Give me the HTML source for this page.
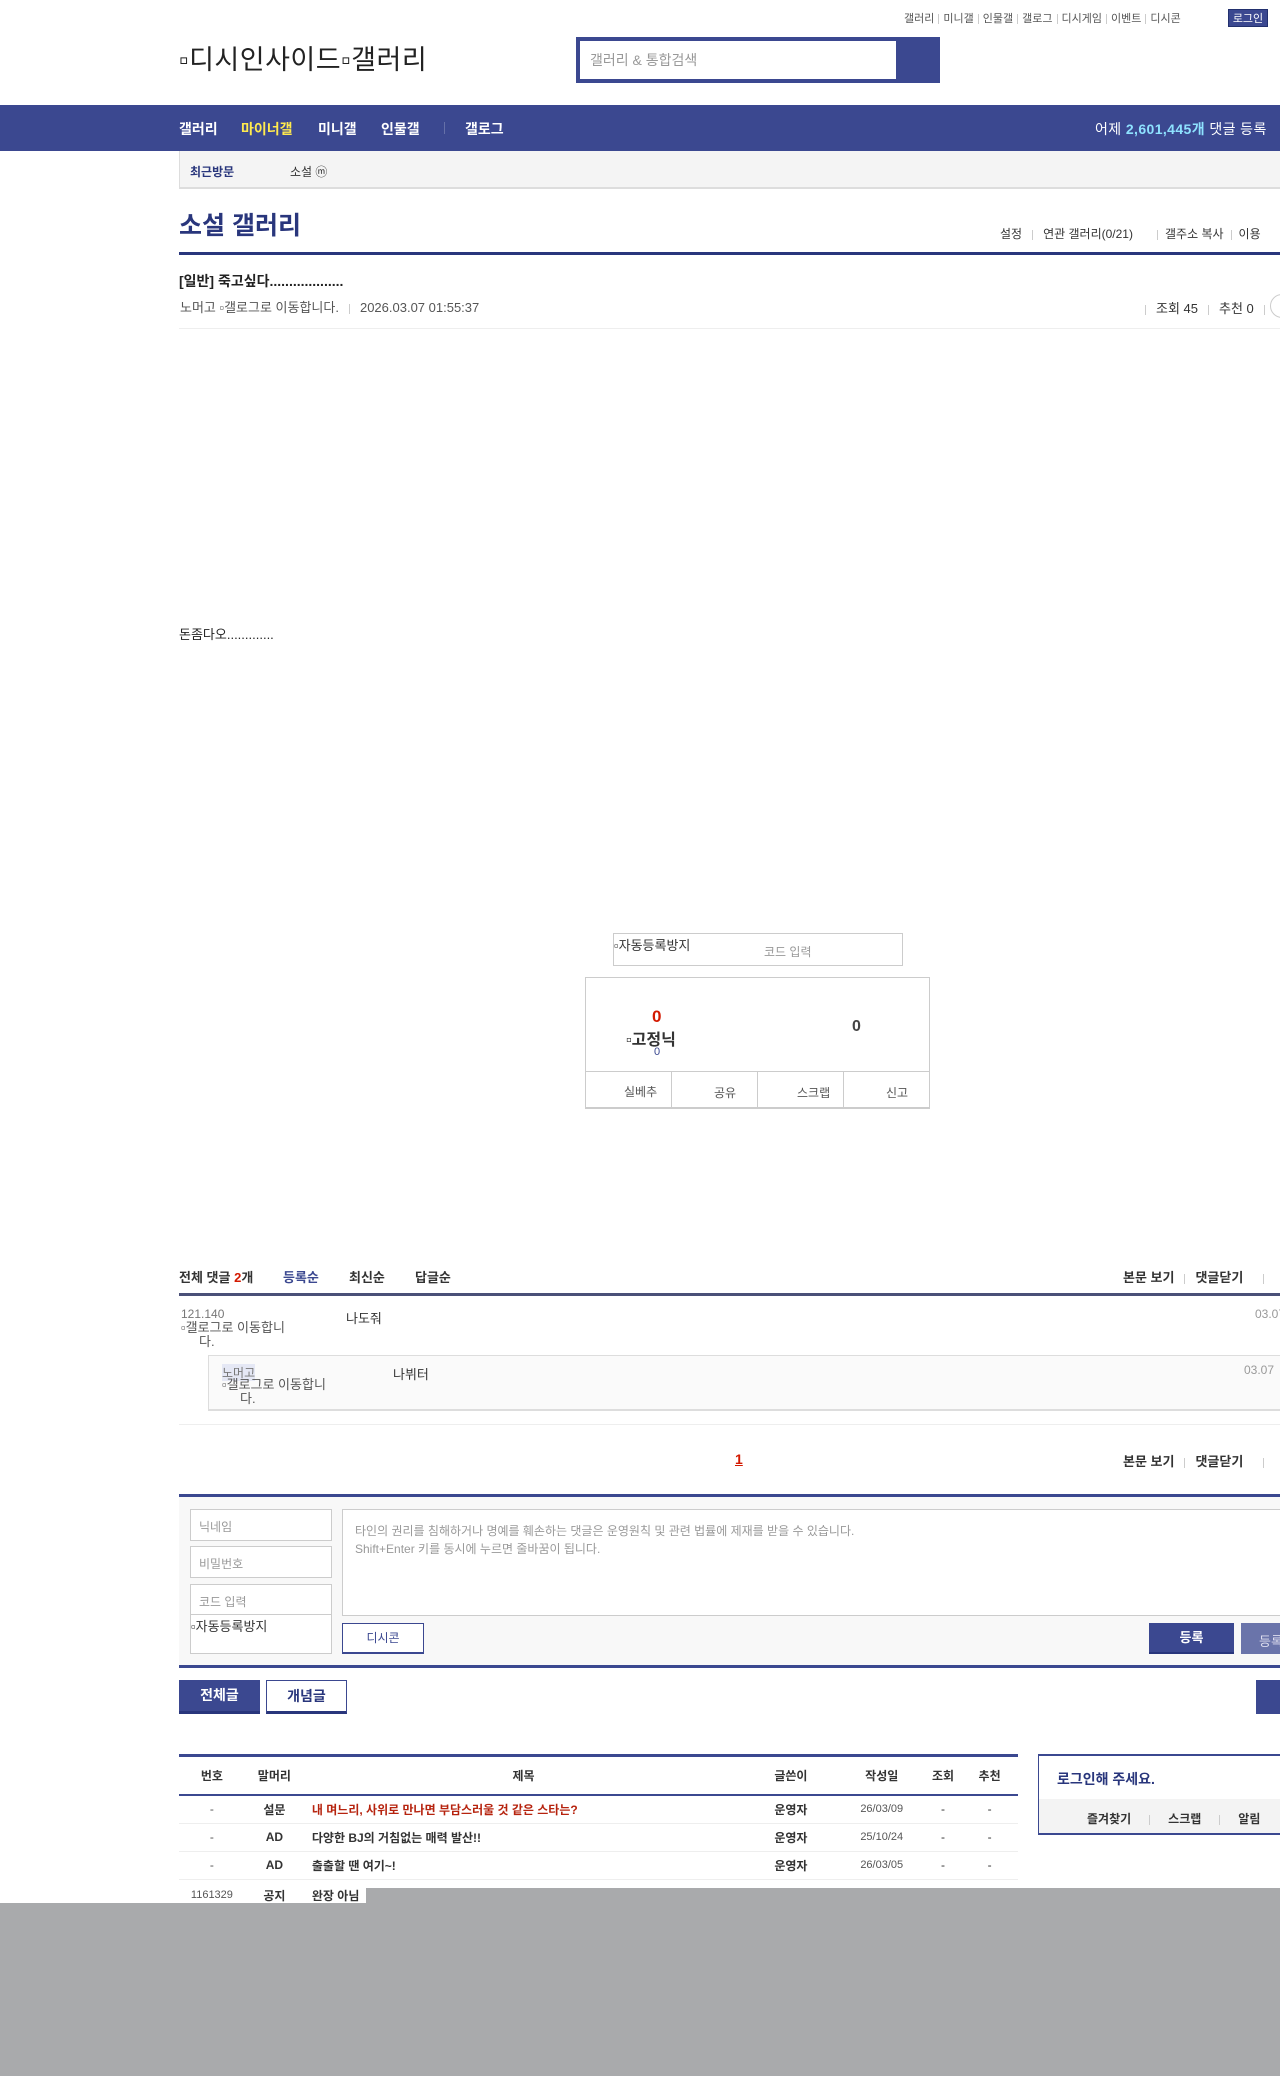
<!DOCTYPE html>
<html><head><meta charset="utf-8"><style>
*{margin:0;padding:0;box-sizing:border-box}
body{width:1280px;height:2076px;position:relative;overflow:hidden;background:#fff;font-family:"Liberation Sans","Noto Sans CJK KR",sans-serif;color:#333;font-size:12px}
.a{position:absolute;white-space:nowrap}
.b{font-weight:bold}
.nav{color:#fff;font-size:14px;font-weight:bold}
.sep{display:inline-block;width:1px;height:10px;background:#ccc;margin:0 7px;vertical-align:middle}
td,th{text-align:center;font-size:12px;height:28px;border-bottom:1px solid #eee}
th{font-weight:bold;height:38px;border-bottom:2px solid #3b4890;color:#333}
</style></head><body>
<div class="a" style="top:10px;left:904px;font-size:11px;color:#555">갤러리<span class="sep" style="margin:0 4px"></span>미니갤<span class="sep" style="margin:0 4px"></span>인물갤<span class="sep" style="margin:0 4px"></span>갤로그<span class="sep" style="margin:0 4px"></span>디시게임<span class="sep" style="margin:0 4px"></span>이벤트<span class="sep" style="margin:0 4px"></span>디시콘</div>
<div class="a" style="top:9px;left:1228px;width:40px;height:18px;background:#3b4890;color:#fff;font-size:11px;text-align:center;line-height:18px;border:1px solid #22306e">로그인</div>
<div class="a" style="top:38px;left:179px;font-size:27px;color:#222;letter-spacing:0.5px">▫디시인사이드▫갤러리</div>
<div class="a" style="top:37px;left:576px;width:364px;height:46px;background:#3b4890"></div>
<div class="a" style="top:41px;left:580px;width:316px;height:38px;background:#fff;color:#999;font-size:14px;line-height:38px;padding-left:10px">갤러리 &amp; 통합검색</div>
<div class="a" style="top:105px;left:0;width:1280px;height:46px;background:#3b4890"></div>
<div class="a nav" style="top:119px;left:179px">갤러리</div>
<div class="a nav" style="top:119px;left:241px;color:#ffea4e">마이너갤</div>
<div class="a nav" style="top:119px;left:318px">미니갤</div>
<div class="a nav" style="top:119px;left:381px">인물갤</div>
<div class="a" style="top:122px;left:444px;width:1px;height:12px;background:#6570a8"></div>
<div class="a nav" style="top:119px;left:465px">갤로그</div>
<div class="a" style="top:119px;left:1095px;color:#fff;font-size:14px;letter-spacing:0.4px">어제 <b style="color:#8ee2ff">2,601,445개</b> 댓글 등록</div>
<div class="a" style="top:151px;left:179px;width:1110px;height:38px;background:#f4f4f4;border-left:1px solid #ddd;border-bottom:2px solid #ddd"></div>
<div class="a b" style="top:163px;left:190px;color:#29367c;font-size:12px">최근방문</div>
<div class="a" style="top:163px;left:290px;font-size:12px;color:#333">소설 ⓜ</div>
<div class="a b" style="top:206px;left:179px;font-size:25px;color:#29367c">소설 갤러리</div>
<div class="a" style="top:225px;left:1000px;font-size:12px;color:#333">설정<span class="sep" style="margin:0 10px"></span>연관 갤러리(0/21)<span class="sep" style="margin-left:24px"></span>갤주소 복사<span class="sep"></span>이용</div>
<div class="a" style="top:252px;left:179px;width:1110px;height:3px;background:#29367c"></div>
<div class="a b" style="top:271px;left:179px;font-size:14px;color:#222">[일반] 죽고싶다...................</div>
<div class="a" style="top:297px;left:180px;font-size:13px;color:#555">노머고 ▫갤로그로 이동합니다.<span class="sep" style="margin:0 10px"></span>2026.03.07 01:55:37</div>
<div class="a" style="top:298px;left:1135px;font-size:13px;color:#333"><span class="sep" style="margin:0 10px"></span>조회 45<span class="sep" style="margin:0 10px"></span>추천 0<span class="sep" style="margin:0 10px"></span></div>
<div class="a" style="top:294px;left:1270px;width:24px;height:24px;border:1px solid #ccc;border-radius:50%"></div>
<div class="a" style="top:328px;left:179px;width:1110px;height:1px;background:#eee"></div>
<div class="a" style="top:624px;left:179px;font-size:13px;color:#222">돈좀다오.............</div>
<div class="a" style="top:933px;left:613px;width:290px;height:33px;border:1px solid #ccc"></div>
<div class="a" style="top:935px;left:614px;font-size:13px;color:#333">▫자동등록방지</div>
<div class="a" style="top:943px;left:764px;font-size:12px;color:#999">코드 입력</div>
<div class="a" style="top:977px;left:585px;width:345px;height:132px;border:1px solid #ccc;border-bottom:2px solid #ccc"></div>
<div class="a b" style="top:1007px;left:652px;font-size:17px;color:#d31900">0</div>
<div class="a b" style="top:1026px;left:626px;font-size:16px;color:#333">▫고정닉</div>
<div class="a" style="top:1046px;left:654px;font-size:11px;color:#3b4890">0</div>
<div class="a b" style="top:1018px;left:852px;font-size:16px;color:#444">0</div>
<div class="a" style="top:1071px;left:585px;width:345px;height:1px;background:#ccc"></div>
<div class="a" style="top:1071px;left:671px;width:1px;height:36px;background:#ccc"></div>
<div class="a" style="top:1071px;left:757px;width:1px;height:36px;background:#ccc"></div>
<div class="a" style="top:1071px;left:843px;width:1px;height:36px;background:#ccc"></div>
<div class="a" style="top:1083px;left:624px;font-size:12px;color:#555">실베추</div>
<div class="a" style="top:1084px;left:714px;font-size:12px;color:#555">공유</div>
<div class="a" style="top:1084px;left:797px;font-size:12px;color:#555">스크랩</div>
<div class="a" style="top:1084px;left:886px;font-size:12px;color:#555">신고</div>
<div class="a b" style="top:1267px;left:179px;font-size:13px;color:#333">전체 댓글 <span style="color:#d31900">2</span>개</div>
<div class="a b" style="top:1267px;left:283px;font-size:13px;color:#3b4890">등록순</div>
<div class="a b" style="top:1267px;left:349px;font-size:13px">최신순</div>
<div class="a b" style="top:1267px;left:415px;font-size:13px">답글순</div>
<div class="a b" style="top:1267px;left:1123px;font-size:13px">본문 보기<span class="sep" style="margin:0 10px"></span>댓글닫기<span class="sep" style="margin:0 20px"></span></div>
<div class="a" style="top:1293px;left:179px;width:1110px;height:3px;background:#4a5078"></div>
<div class="a" style="top:1307px;left:181px;font-size:12px;color:#777">121.140</div>
<div class="a" style="top:1321px;left:181px;font-size:13px;color:#555;line-height:14px">▫갤로그로 이동합니<br>&nbsp;&nbsp;&nbsp;&nbsp;&nbsp;다.</div>
<div class="a" style="top:1308px;left:346px;font-size:13px;color:#333">나도줘</div>
<div class="a" style="top:1307px;left:1255px;font-size:12px;color:#999">03.07</div>
<div class="a" style="top:1355px;left:208px;width:1090px;height:56px;background:#fafafa;border:1px solid #ddd;border-bottom-width:2px"></div>
<div class="a" style="top:1364px;left:222px;font-size:12px;color:#777;background:#e5e8f5">노머고</div>
<div class="a" style="top:1378px;left:222px;font-size:13px;color:#555;line-height:14px">▫갤로그로 이동합니<br>&nbsp;&nbsp;&nbsp;&nbsp;&nbsp;다.</div>
<div class="a" style="top:1364px;left:393px;font-size:13px;color:#333">나뷔터</div>
<div class="a" style="top:1363px;left:1244px;font-size:12px;color:#999">03.07</div>
<div class="a" style="top:1424px;left:179px;width:1110px;height:1px;background:#eee"></div>
<div class="a b" style="top:1451px;left:735px;font-size:14px;color:#d31900;text-decoration:underline">1</div>
<div class="a b" style="top:1451px;left:1123px;font-size:13px">본문 보기<span class="sep" style="margin:0 10px"></span>댓글닫기<span class="sep" style="margin:0 20px"></span></div>
<div class="a" style="top:1494px;left:179px;width:1110px;height:174px;background:#f8f8f8;border-top:3px solid #3b4890;border-bottom:3px solid #3b4890"></div>
<div class="a" style="top:1509px;left:190px;width:142px;height:32px;background:#fff;border:1px solid #ccc;color:#999;font-size:12px;padding:8px">닉네임</div>
<div class="a" style="top:1546px;left:190px;width:142px;height:32px;background:#fff;border:1px solid #ccc;color:#999;font-size:12px;padding:8px">비밀번호</div>
<div class="a" style="top:1584px;left:190px;width:142px;height:70px;background:#fff;border:1px solid #ccc;color:#999;font-size:12px;padding:8px">코드 입력</div>
<div class="a" style="top:1614px;left:191px;width:140px;height:1px;background:#ccc"></div>
<div class="a" style="top:1616px;left:191px;font-size:13px;color:#333">▫자동등록방지</div>
<div class="a" style="top:1509px;left:342px;width:960px;height:107px;background:#fff;border:1px solid #ccc;color:#999;font-size:12px;padding:12px;line-height:18px">타인의 권리를 침해하거나 명예를 훼손하는 댓글은 운영원칙 및 관련 법률에 제재를 받을 수 있습니다.<br>Shift+Enter 키를 동시에 누르면 줄바꿈이 됩니다.</div>
<div class="a" style="top:1623px;left:342px;width:82px;height:31px;background:#fff;border:1px solid #3b4890;border-bottom-width:2px;color:#3b4890;font-size:12px;text-align:center;line-height:28px">디시콘</div>
<div class="a b" style="top:1623px;left:1149px;width:85px;height:31px;background:#3b4890;color:#fff;font-size:13px;text-align:center;line-height:30px;border-bottom:2px solid #29367c">등록</div>
<div class="a" style="top:1623px;left:1241px;width:60px;height:31px;background:#6a74aa;color:#dde;font-size:13px;padding:8px 18px">등록</div>
<div class="a b" style="top:1680px;left:179px;width:81px;height:34px;background:#3b4890;color:#fff;font-size:14px;text-align:center;line-height:30px;border-bottom:3px solid #29367c">전체글</div>
<div class="a b" style="top:1680px;left:266px;width:81px;height:34px;background:#fff;color:#29367c;font-size:14px;text-align:center;line-height:30px;border:1px solid #3b4890;border-bottom:3px solid #29367c">개념글</div>
<div class="a" style="top:1680px;left:1256px;width:40px;height:34px;background:#3b4890"></div>
<div class="a" style="top:1754px;left:179px;width:839px;height:3px;background:#3b4890"></div>
<table class="a" style="top:1757px;left:179px;width:839px;border-collapse:collapse">
<tr><th style="width:58px">번호</th><th style="width:52px">말머리</th><th style="width:387px">제목</th><th style="width:84px">글쓴이</th><th style="width:76px">작성일</th><th style="width:32px">조회</th><th style="width:50px">추천</th></tr>
<tr><td style="color:#555">-</td><td class="b">설문</td><td class="b" style="text-align:left;padding-left:8px;color:#b6230e">내 며느리, 사위로 만나면 부담스러울 것 같은 스타는?</td><td class="b">운영자</td><td style="font-size:11px;color:#555">26/03/09</td><td>-</td><td>-</td></tr>
<tr><td style="color:#555">-</td><td class="b">AD</td><td class="b" style="text-align:left;padding-left:8px">다양한 BJ의 거침없는 매력 발산!!</td><td class="b">운영자</td><td style="font-size:11px;color:#555">25/10/24</td><td>-</td><td>-</td></tr>
<tr><td style="color:#555">-</td><td class="b">AD</td><td class="b" style="text-align:left;padding-left:8px">출출할 땐 여기~!</td><td class="b">운영자</td><td style="font-size:11px;color:#555">26/03/05</td><td>-</td><td>-</td></tr>
<tr><td style="font-size:11px;color:#555;height:32px">1161329</td><td class="b">공지</td><td class="b" style="text-align:left;padding-left:8px">완장 아님</td><td class="b">김갈코</td><td></td><td></td><td></td></tr>
</table>
<div class="a" style="top:1754px;left:1038px;width:260px;height:81px;border:1px solid #3b4890;border-top-width:2px;border-bottom-width:2px"></div>
<div class="a b" style="top:1769px;left:1057px;font-size:14px;color:#29367c">로그인해 주세요.</div>
<div class="a" style="top:1799px;left:1039px;width:260px;height:34px;background:#f3f3f3"></div>
<div class="a b" style="top:1810px;left:1087px;font-size:12px;color:#333">즐겨찾기<span class="sep" style="margin:0 18px"></span>스크랩<span class="sep" style="margin:0 18px"></span>알림</div>
<div class="a" style="top:1888px;left:366px;width:914px;height:20px;background:#a9aaac"></div>
<div class="a" style="top:1903px;left:0;width:1280px;height:173px;background:#a9aaac"></div>
</body></html>
